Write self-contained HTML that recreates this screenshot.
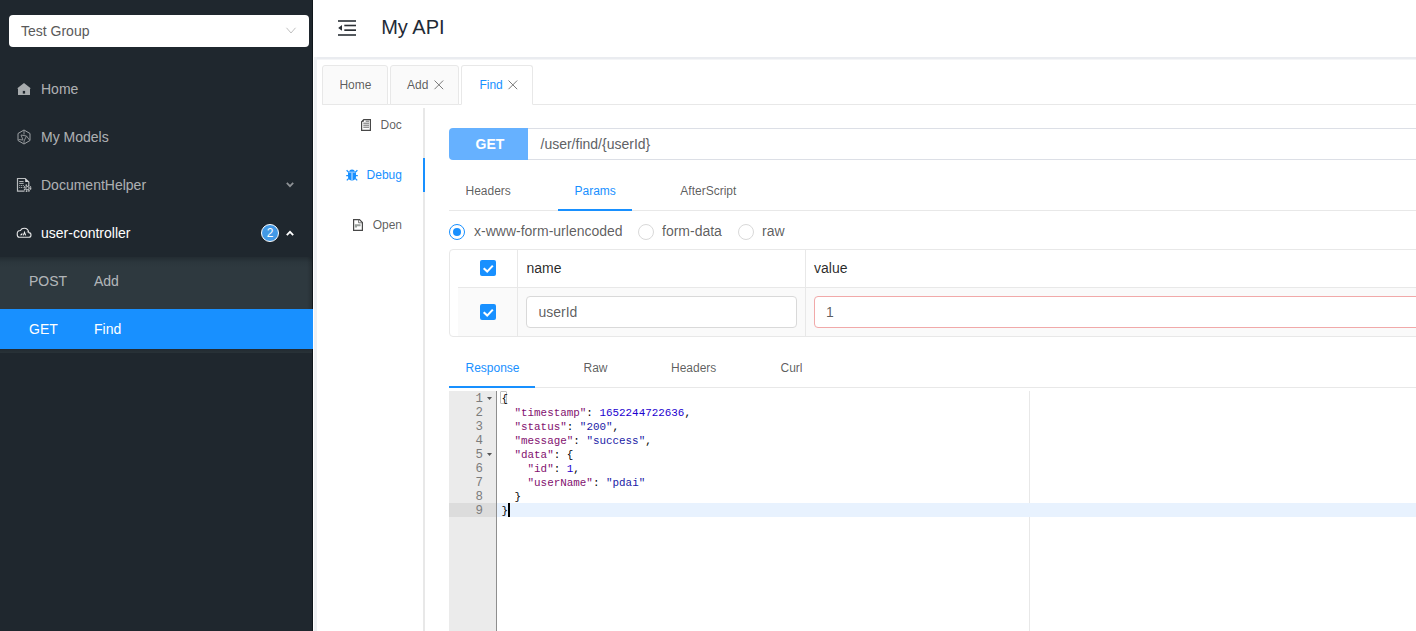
<!DOCTYPE html>
<html><head><meta charset="utf-8">
<style>
*{box-sizing:border-box;margin:0;padding:0}
html,body{width:1416px;height:631px;overflow:hidden;background:#fff;font-family:"Liberation Sans",sans-serif;color:rgba(0,0,0,.65)}
.a{position:absolute}
.t{position:absolute;white-space:nowrap}
svg{position:absolute;overflow:visible}
/* sidebar */
#side{position:absolute;left:0;top:0;width:313px;height:631px;background:#1f272e}
#side .edge{position:absolute;left:312px;top:0;width:1px;height:631px;background:#10171c}
#sel{position:absolute;left:9px;top:15px;width:300px;height:32px;background:#fff;border-radius:4px}
#sel .t{left:12px;top:0;line-height:32px;font-size:14px;color:#595959}
.mi{position:absolute;left:0;width:313px;height:48px}
.mi .t{left:41px;top:0;line-height:48px;font-size:14px;color:rgba(255,255,255,.65)}
#sub{position:absolute;left:0;top:257px;width:312px;height:96px;background:linear-gradient(to left,rgba(0,0,0,.18),rgba(0,0,0,0) 5px),linear-gradient(#232c32 0,#2b363c 5px,#2e393f 10px)}
#hl{position:absolute;left:0;top:309px;width:313px;height:40px;background:#1890ff;z-index:2}
/* header */
#band{position:absolute;left:314px;top:57px;width:1102px;height:2px;background:#eaecf0;border-bottom:0}#band2{position:absolute;left:317px;top:59px;width:1099px;height:1px;background:#f4f5f7}
#lstrip{position:absolute;left:314px;top:57px;width:3px;height:574px;background:#eef0f3}
/* tabs */
.ctab{position:absolute;top:65px;height:40px;background:#fafafa;border:1px solid #e8e8e8;border-radius:3px 3px 0 0}
.ctab .t{top:0;line-height:38px;font-size:12px;color:rgba(0,0,0,.65)}
.hl{position:absolute;height:1px;background:#e8e8e8}
.vl{position:absolute;width:1px;background:#e8e8e8}
.f12{font-size:12px}
.f14{font-size:14px}

#gut{position:absolute;left:449px;top:392.4px;width:34px;font-family:"Liberation Mono",monospace;font-size:12.4px;line-height:14px;text-align:right;color:#7c7c7c}
#code{position:absolute;left:501.4px;top:391.6px;font-family:"Liberation Mono",monospace;font-size:10.9px;line-height:14px;white-space:pre;color:#000}
#code i{font-style:normal}
#code .k{color:#82106f}
#code .s{color:#1a1aa6}
#code .n{color:#1c00cf}
</style></head><body>
<div id="side">
  <div id="sel"><span class="t">Test Group</span>
    <svg style="left:277px;top:12px" width="10" height="7" viewBox="0 0 10 7"><path d="M0.5 0.8 L5 6 L9.5 0.8" fill="none" stroke="#c0c0c0" stroke-width="1"/></svg>
  </div>
  <!-- home icon -->
  <svg style="left:16px;top:82px" width="16" height="14" viewBox="0 0 16 14"><path d="M1 6.6 L8 0.9 L15 6.6 L14 6.6 L14 13.1 L2 13.1 L2 6.6 Z" fill="#a7abad"/><rect x="6.8" y="8.9" width="2.3" height="2.7" fill="#1f272e"/></svg>
  <div class="mi" style="top:65px"><span class="t">Home</span></div>
  <!-- models icon -->
  <svg style="left:17px;top:129px" width="14" height="16" viewBox="0 0 14 16"><path d="M7 1 L13 4.5 L13 11.5 L7 15 L1 11.5 L1 4.5 Z" fill="none" stroke="#9da1a4" stroke-width="1"/><path d="M7 1.5 V5.5 M4 6 L9.5 7 L7 12 M4 6 L6 11 M9.5 7 L12.5 11 M7 12 V14.5 M1.5 10.5 L6 11" fill="none" stroke="#8d9194" stroke-width="1"/></svg>
  <div class="mi" style="top:113px"><span class="t">My Models</span></div>
  <!-- doc helper icon -->
  <svg style="left:16px;top:177px" width="16" height="16" viewBox="0 0 16 16"><path d="M8.5 14.1 H1.5 V1.5 H9.2 L12.8 5.1 V7.6" fill="none" stroke="#b9bcbe" stroke-width="1.2"/><path d="M9.2 1.5 L12.8 5.1 H9.2 Z" fill="#d5d7d8"/><path d="M3.2 4.5 H7.6 M3.2 6.4 H7.6" stroke="#b0b3b5" stroke-width="1"/><path d="M3.2 8.5 H8 M3.2 10.5 H7.4" stroke="#9ea2a4" stroke-width="1" stroke-dasharray="1.1 0.7"/><circle cx="11.5" cy="11.1" r="3.1" fill="none" stroke="#b9bcbe" stroke-width="1.6" stroke-dasharray="1.5 0.95"/><circle cx="11.5" cy="11.1" r="2.2" fill="#b9bcbe"/><circle cx="11.4" cy="11.2" r="1.1" fill="#1f272e"/></svg>
  <div class="mi" style="top:161px"><span class="t">DocumentHelper</span></div>
  <svg style="left:286px;top:182px" width="8" height="6" viewBox="0 0 8 6"><path d="M0.8 0.8 L4 4.2 L7.2 0.8" fill="none" stroke="#8e9296" stroke-width="1.7"/></svg>
  <!-- cloud icon -->
  <svg style="left:16px;top:227px" width="16" height="12" viewBox="0 0 16 12"><path d="M3.3 10.3 H12.8 C14.2 10.3 15 9.2 15 8 C15 6.7 14.1 5.7 12.8 5.6 C12.5 3.1 10.5 1.3 8.2 1.3 C6.5 1.3 5.1 2.2 4.4 3.5 C2.5 3.5 1.2 5 1.2 6.9 C1.2 8.8 2.2 10.3 3.3 10.3 Z" fill="none" stroke="#e6e7e8" stroke-width="1.1"/><path d="M3.8 8.3 L6.3 5.8 L6.3 8.3 Z" fill="#f0f0f0"/><path d="M7.4 8.4 L8.5 5.4 L9.7 8.4" fill="none" stroke="#f0f0f0" stroke-width="1.1"/><path d="M10.8 5.2 L12 4.6" stroke="#bbb" stroke-width="0.9"/></svg>
  <div class="mi" style="top:209px"><span class="t" style="color:#fff">user-controller</span></div>
  <div class="a" style="left:261px;top:224px;width:18px;height:18px;border-radius:50%;background:#4299e6;border:1px solid #fff"></div>
  <span class="t" style="left:266px;top:224px;width:8px;text-align:center;line-height:18px;font-size:12px;color:#fff">2</span>
  <svg style="left:286px;top:230px" width="8" height="7" viewBox="0 0 8 7"><path d="M0.8 5.2 L4 1.8 L7.2 5.2" fill="none" stroke="#fff" stroke-width="1.8"/></svg>
  <div id="sub"></div>
  <div class="mi" style="top:257px;height:48px"><span class="t" style="left:29px">POST</span><span class="t" style="left:94px">Add</span></div>
  <div class="a" style="left:0;top:349px;width:312px;height:4px;background:linear-gradient(#222a30,#283238)"></div><div id="hl"><span class="t" style="left:29px;line-height:40px;font-size:14px;color:#fff">GET</span><span class="t" style="left:94px;line-height:40px;font-size:14px;color:#fff">Find</span></div>
  <div class="edge"></div>
</div>

<!-- header -->
<svg style="left:338px;top:20px" width="18" height="16" viewBox="0 0 18 16"><rect x="0" y="0" width="18" height="2" fill="#54595e"/><rect x="6.3" y="4.7" width="11.7" height="1.6" fill="#2b3035"/><rect x="6.3" y="9.3" width="11.7" height="1.7" fill="#2b3035"/><path d="M0.2 7.9 L4 4.9 L4 10.8 Z" fill="#2b3035"/><rect x="0" y="14" width="18" height="2" fill="#54595e"/></svg>
<span class="t" style="left:381.2px;top:-0.5px;line-height:54px;font-size:20px;color:#1f2a36">My API</span>
<div id="band"></div><div id="band2"></div>
<div id="lstrip"></div>

<!-- top tabs -->
<div class="hl" style="left:322px;top:104px;width:1094px"></div>
<div class="ctab" style="left:322px;width:66px"><span class="t" style="left:16.4px">Home</span></div>
<div class="ctab" style="left:390px;width:69px"><span class="t" style="left:16px">Add</span>
  <svg style="left:43.3px;top:13.9px" width="10" height="10" viewBox="0 0 10 10"><path d="M0.5 0.5 L9.2 9.2 M9.2 0.5 L0.5 9.2" stroke="#7a7a7a" stroke-width="1"/></svg></div>
<div class="ctab" style="left:461px;width:72px;background:#fff;border-bottom-color:#fff"><span class="t" style="left:17.4px;color:#1890ff">Find</span>
  <svg style="left:46.1px;top:13.9px" width="10" height="10" viewBox="0 0 10 10"><path d="M0.5 0.5 L9.2 9.2 M9.2 0.5 L0.5 9.2" stroke="#7a7a7a" stroke-width="1"/></svg></div>

<!-- left vertical tabs -->
<div class="a" style="left:423px;top:108px;width:2px;height:523px;background:#e8e8e8"></div>
<div class="a" style="left:423px;top:158px;width:2px;height:34px;background:#1890ff"></div>
<svg style="left:361px;top:119px" width="10" height="12" viewBox="0 0 10 12"><path d="M2.8 0.6 H9.4 V11.4 H0.6 V2.8 Z" fill="none" stroke="#484848" stroke-width="1.2"/><path d="M0.6 2.8 L2.8 2.8 L2.8 0.6" fill="#484848"/><path d="M4.7 2.2 H8 M2.3 4.2 H8 M2.3 6.2 H8 M2.3 8.2 H8" stroke="#555" stroke-width="0.9"/></svg>
<span class="t f12" style="left:380.5px;top:110px;line-height:30px">Doc</span>
<svg style="left:346px;top:169px" width="12" height="12" viewBox="0 0 12 12"><path d="M6 0.6 C7.6 0.6 8.6 1.5 8.8 2.6 C9.6 3.1 10 3.8 10 4.6 V8 C10 10.2 8.2 11.6 6 11.6 C3.8 11.6 2 10.2 2 8 V4.6 C2 3.8 2.4 3.1 3.2 2.6 C3.4 1.5 4.4 0.6 6 0.6 Z" fill="#1890ff"/><rect x="5.2" y="3.2" width="1.6" height="8.2" fill="#91c8ff"/><rect x="3" y="2.6" width="6" height="1.2" fill="#91c8ff"/><path d="M0.6 1.2 L2.8 3.4 M11.4 1.2 L9.2 3.4 M0.2 6.6 H2 M11.8 6.6 H10 M0.8 11.4 L2.8 9.4 M11.2 11.4 L9.2 9.4" stroke="#1890ff" stroke-width="1.3"/></svg>
<span class="t f12" style="left:366.6px;top:160px;line-height:30px;color:#1890ff">Debug</span>
<svg style="left:353px;top:219px" width="10" height="12" viewBox="0 0 10 12"><path d="M0.6 0.6 H6.5 L9.4 3.5 V11.4 H0.6 Z" fill="none" stroke="#484848" stroke-width="1.2"/><path d="M5.6 0.6 V3.8 H9" fill="none" stroke="#666" stroke-width="0.9"/><path d="M1.8 5.2 H7.6 V7.2 H4 V8.4 H1.8 Z" fill="#9aa09c"/></svg>
<span class="t f12" style="left:372.7px;top:210px;line-height:30px">Open</span>

<!-- url bar -->
<div class="a" style="left:449px;top:128px;width:79px;height:32px;background:#66b1ff;border-radius:4px 0 0 4px"></div>
<span class="t f14" style="left:450.5px;top:128px;width:79px;text-align:center;line-height:32px;font-weight:bold;color:#fff">GET</span>
<div class="a" style="left:528px;top:128px;width:900px;height:32px;border:1px solid #dcdfe6;border-left:none"></div>
<span class="t f14" style="left:540.5px;top:128px;line-height:32px;color:#606266">/user/find/{userId}</span>

<!-- request tabs -->
<div class="hl" style="left:449px;top:210px;width:967px"></div>
<div class="a" style="left:558px;top:209px;width:74px;height:2px;background:#1890ff"></div>
<span class="t f12" style="left:465.5px;top:176px;line-height:30px">Headers</span>
<span class="t f12" style="left:574.5px;top:176px;line-height:30px;color:#1890ff">Params</span>
<span class="t f12" style="left:680.3px;top:176px;line-height:30px">AfterScript</span>

<!-- radios -->
<div class="a" style="left:449px;top:224px;width:16px;height:16px;border-radius:50%;border:1px solid #1890ff;background:#fff"></div>
<div class="a" style="left:453px;top:228px;width:8px;height:8px;border-radius:50%;background:#1890ff"></div>
<span class="t f14" style="left:474px;top:217px;line-height:28px">x-www-form-urlencoded</span>
<div class="a" style="left:638px;top:224px;width:16px;height:16px;border-radius:50%;border:1px solid #d9d9d9;background:#fff"></div>
<span class="t f14" style="left:662px;top:217px;line-height:28px">form-data</span>
<div class="a" style="left:738px;top:224px;width:16px;height:16px;border-radius:50%;border:1px solid #d9d9d9;background:#fff"></div>
<span class="t f14" style="left:762px;top:217px;line-height:28px">raw</span>

<!-- params table -->
<div class="a" style="left:449px;top:249px;width:1000px;height:88px;border:1px solid #e8e8e8;border-radius:4px"></div>
<div class="a" style="left:458px;top:288px;width:958px;height:48px;background:#fafafa"></div>
<div class="hl" style="left:458px;top:287px;width:958px"></div>
<div class="vl" style="left:517px;top:250px;height:86px"></div>
<div class="vl" style="left:805px;top:250px;height:86px"></div>
<svg style="left:480px;top:260px" width="16" height="16" viewBox="0 0 16 16"><rect x="0" y="0" width="16" height="16" rx="2" fill="#1890ff"/><path d="M3.7 8.3 L7.2 11.6 L12.8 5.6" fill="none" stroke="#fff" stroke-width="2.1"/></svg>
<svg style="left:480px;top:304px" width="16" height="16" viewBox="0 0 16 16"><rect x="0" y="0" width="16" height="16" rx="2" fill="#1890ff"/><path d="M3.7 8.3 L7.2 11.6 L12.8 5.6" fill="none" stroke="#fff" stroke-width="2.1"/></svg>
<span class="t f14" style="left:526.5px;top:254px;line-height:28px;color:rgba(0,0,0,.85)">name</span>
<span class="t f14" style="left:814px;top:254px;line-height:28px;color:rgba(0,0,0,.85)">value</span>
<div class="a" style="left:526px;top:296px;width:271px;height:32px;border:1px solid #d9d9d9;border-radius:4px;background:#fff"></div>
<span class="t f14" style="left:538.5px;top:296px;line-height:32px">userId</span>
<div class="a" style="left:814px;top:296px;width:700px;height:32px;border:1px solid #f1a9a9;border-radius:4px;background:#fff"></div>
<span class="t f14" style="left:826px;top:296px;line-height:32px">1</span>

<!-- response tabs -->
<div class="hl" style="left:449px;top:387px;width:967px"></div>
<div class="a" style="left:449px;top:386px;width:86px;height:2px;background:#1890ff"></div>
<span class="t f12" style="left:465.5px;top:353px;line-height:30px;color:#1890ff">Response</span>
<span class="t f12" style="left:583.5px;top:353px;line-height:30px">Raw</span>
<span class="t f12" style="left:671px;top:353px;line-height:30px">Headers</span>
<span class="t f12" style="left:780.5px;top:353px;line-height:30px">Curl</span>

<!-- editor -->
<div class="a" style="left:449px;top:391px;width:47px;height:240px;background:#ebebeb"></div>
<div class="a" style="left:496px;top:391px;width:1px;height:240px;background:#8e8e8e"></div>

<div class="a" style="left:497px;top:503px;width:919px;height:14px;background:#e8f2fe"></div>
<div class="a" style="left:449px;top:503px;width:47px;height:14px;background:#dcdcdc"></div>
<div class="a" style="left:1029px;top:391px;width:1px;height:112px;background:#e8e8e8"></div>
<div class="a" style="left:1029px;top:517px;width:1px;height:114px;background:#e8e8e8"></div>
<div class="a" style="left:500px;top:391px;width:7px;height:13px;border:1px solid #c0c0c0;border-radius:1px"></div>
<div id="gut">
<div>1</div><div>2</div><div>3</div><div>4</div><div>5</div><div>6</div><div>7</div><div>8</div><div>9</div>
</div>
<svg style="left:487px;top:397px" width="5" height="3" viewBox="0 0 5 3"><path d="M0 0 H5 L2.5 3 Z" fill="#555"/></svg>
<svg style="left:487px;top:453px" width="5" height="3" viewBox="0 0 5 3"><path d="M0 0 H5 L2.5 3 Z" fill="#555"/></svg>
<div id="code"><div>{</div><div>  <i class="k">"timestamp"</i>: <i class="n">1652244722636</i>,</div><div>  <i class="k">"status"</i>: <i class="s">"200"</i>,</div><div>  <i class="k">"message"</i>: <i class="s">"success"</i>,</div><div>  <i class="k">"data"</i>: {</div><div>    <i class="k">"id"</i>: <i class="n">1</i>,</div><div>    <i class="k">"userName"</i>: <i class="s">"pdai"</i></div><div>  }</div><div>}</div></div>
<div class="a" style="left:508px;top:503px;width:2px;height:14px;background:#000"></div>
</body></html>
